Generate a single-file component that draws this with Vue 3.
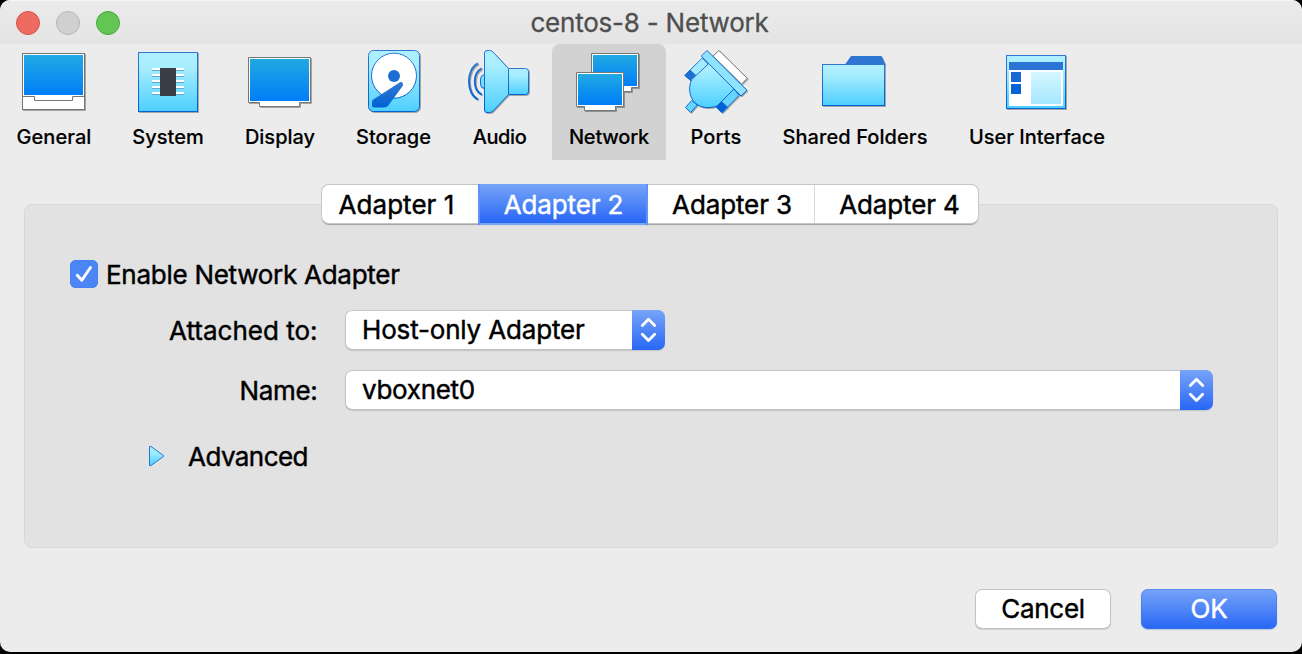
<script setup>
import { ref } from 'vue'

const tools = [
  { id: 'general', label: 'General', x: 0, w: 108, ls: 0.05 },
  { id: 'system', label: 'System', x: 108, w: 120, ls: 0 },
  { id: 'display', label: 'Display', x: 228, w: 104, ls: 0 },
  { id: 'storage', label: 'Storage', x: 332, w: 123, ls: 0.05 },
  { id: 'audio', label: 'Audio', x: 455, w: 89, ls: -0.4 },
  { id: 'network', label: 'Network', x: 552, w: 114, ls: -0.2 },
  { id: 'ports', label: 'Ports', x: 666, w: 100, ls: 0.15 },
  { id: 'folders', label: 'Shared Folders', x: 766, w: 178, ls: 0.08 },
  { id: 'ui', label: 'User Interface', x: 944, w: 186, ls: 0 }
]
const current = ref('network')
const tabs = ['Adapter 1', 'Adapter 2', 'Adapter 3', 'Adapter 4']
const tab = ref(1)
const enabled = ref(true)
</script>

<template>
  <div class="desktop">
    <div class="window">
      <header class="titlebar">
        <div class="lights">
          <i class="light red"></i><i class="light grey"></i><i class="light green"></i>
        </div>
        <h1>centos-8 - Network</h1>
      </header>

      <svg class="defs" width="0" height="0" aria-hidden="true">
        <defs>
          <linearGradient id="screen" x1="0" y1="0" x2="0" y2="1"><stop offset="0" stop-color="#20a9e2" /><stop offset="1" stop-color="#007ef8" /></linearGradient>
          <linearGradient id="sky" x1="0" y1="0" x2="0" y2="1"><stop offset="0" stop-color="#aff0ff" /><stop offset=".25" stop-color="#a8eeff" /><stop offset="1" stop-color="#4dcfff" /></linearGradient>
          <linearGradient id="edge" x1="0" y1="0" x2="0" y2="1"><stop offset="0" stop-color="#3278d2" /><stop offset="1" stop-color="#0062d4" /></linearGradient>
          <linearGradient id="pane" x1="0" y1="0" x2="0" y2="1"><stop offset="0" stop-color="#d6f7ff" /><stop offset="1" stop-color="#a5e7ff" /></linearGradient>
        </defs>
      </svg>

      <nav class="toolbar">
        <button v-for="t in tools" :key="t.id" class="tool" :class="[t.id, { active: current === t.id }]" @click="current = t.id">
          <svg :width="t.w" height="72" :viewBox="`${t.x} 44 ${t.w} 72`">
            <g v-if="t.id === 'general'" class="shade">
              <rect x="22.5" y="53.5" width="62" height="56" fill="#fff" stroke="#767676" />
              <rect x="24" y="55" width="59" height="40" fill="url(#screen)" />
              <path d="M22.5 96.5H34.5V100.500H72.500V96.500H84.500" fill="none" stroke="#767676" />
            </g>
            <g v-else-if="t.id === 'system'" class="shade">
              <rect x="138.500" y="52.500" width="59" height="59" fill="url(#sky)" stroke="url(#edge)" />
              <g v-for="n in 5" :key="n">
                <rect x="152" :y="62 + n * 6" width="32" height="2" fill="#fff" />
                <rect x="152" :y="64 + n * 6" width="32" height="1" fill="#62a9dc" />
              </g>
              <rect x="160" y="68" width="16" height="28" fill="#3a3e49" />
            </g>
            <g v-else-if="t.id === 'display'" class="shade">
              <path d="M248.500 57.500H310.500V102.500H299.500V106.500H259.500V102.500H248.500Z" fill="#fff" stroke="#767676" />
              <rect x="250" y="59" width="59" height="42" fill="url(#screen)" />
            </g>
            <g v-else-if="t.id === 'storage'" class="shade">
              <rect x="368.500" y="50.500" width="51" height="61" rx="5" fill="url(#sky)" stroke="url(#edge)" />
              <circle cx="394" cy="75.700" r="22.500" fill="#fff" stroke="url(#edge)" />
              <circle cx="394" cy="76" r="6" fill="#1c6dd4" />
              <path d="M400 82.300Q402.800 81.200 403 84.200Q403 85.500 402.300 86.600L388.500 105.200Q386.500 107.600 384 107.600H374Q372 107.600 372 105.500V102.200Q372 100.600 373.300 99.600L378 96.500Z" fill="url(#edge)" />
            </g>
            <g v-else-if="t.id === 'audio'" class="shade" stroke="url(#edge)">
              <path d="M478 63.500C466 69 466 94 478 99.300M481.700 68.300C472.500 73 472.500 90 481.700 94.500" fill="none" stroke-width="2" />
              <path d="M484.500 74.500Q480.500 75 480.500 79V84Q480.500 88 484.500 88.500Z" fill="#7fdcff" />
              <path d="M508.500 68.500H525.500Q528.500 68.500 528.500 71.500V91.500Q528.500 94.500 525.500 94.500H508.500Z" fill="url(#sky)" />
              <path d="M484.500 53Q484.500 50.500 487 50.500H489.500Q491.500 50.500 493 52L508.500 68.500V94.500L493 111Q491.500 112.500 489.500 112.500H487Q484.500 112.500 484.500 110Z" fill="url(#sky)" />
            </g>
            <g v-else-if="t.id === 'network'" class="shade">
              <path d="M591.500 53.500H638.500V87.500H631.500V91.500H599.500V87.500H591.500Z" fill="#fff" stroke="#767676" />
              <rect x="593" y="55" width="44" height="31" fill="url(#screen)" />
              <path d="M576.500 72.500H623.500V106.500H615.500V110.500H584.500V106.500H576.500Z" fill="#fff" stroke="#767676" />
              <rect x="578" y="74" width="44" height="31" fill="url(#screen)" />
            </g>
            <g v-else-if="t.id === 'ports'" class="shade" stroke="url(#edge)" stroke-linejoin="round">
              <path d="M719 50.500L747.300 78.300L741.500 84L713 56Z" fill="#fff" stroke="#777" />
              <path d="M691.500 100.500L697.300 105L690.700 112.500L685.500 107.500Z" fill="#63d5ff" />
              <path d="M702.300 58L684.800 75.200L691.600 81.300L708.300 64Z" fill="#a3ecff" />
              <path d="M739 95.500L722 112.500L715.700 106.700L734 89Z" fill="#65d5ff" />
              <path d="M684.800 75.200L690 70L697 76.500L691.600 81.300Z" fill="#1c6dd4" />
              <path d="M715.700 106.700L721.200 101.200L727.500 107L722 112.500Z" fill="#0062d4" />
              <path d="M702.300 58L708.300 64L691.500 79.500C687 91 691 101 698 105C704 109 713 107.500 717 106L734 89L739.500 94.800Z" fill="url(#sky)" stroke="none" />
              <path d="M702.500 58.200L708.300 64L691.500 79.800C687 91 691 101 698 105C704 109 713 107.500 717 106L734 89L739.500 94.500" fill="none" />
              <path d="M707 50.500L747 90.300L741 96L701.200 56Z" fill="#8ee4ff" />
            </g>
            <g v-else-if="t.id === 'folders'" class="shade">
              <path d="M845 64.500L851 56H881.500L885.500 64.500Z" fill="#2f76d2" />
              <rect x="822.500" y="64.500" width="62" height="41" fill="url(#sky)" stroke="url(#edge)" />
            </g>
            <g v-else class="shade">
              <rect x="1006.500" y="55.500" width="59" height="53" fill="url(#sky)" stroke="url(#edge)" />
              <rect x="1009" y="62" width="54" height="44" fill="#fff" />
              <rect x="1009" y="62" width="54" height="8" fill="#2c74d3" />
              <rect x="1011" y="72" width="10" height="10" fill="#176ad5" />
              <rect x="1011" y="84" width="10" height="10" fill="#0463d6" />
              <rect x="1031" y="72" width="30" height="32" fill="url(#pane)" />
            </g>
          </svg>
          <span :style="{ letterSpacing: t.ls + 'px' }">{{ t.label }}</span>
        </button>
      </nav>

      <main>
        <div class="tabs" role="tablist">
          <button v-for="(t, i) in tabs" :key="t" class="tab" :class="{ selected: tab === i }" @click="tab = i"><span>{{ t }}</span></button>
        </div>

        <section class="group">
          <label class="enable">
            <span class="check" @click="enabled = !enabled">
              <svg v-if="enabled" width="28" height="28" viewBox="0 0 28 28"><path d="M7.300 15.300L11.800 20.300L20.500 7.500" fill="none" stroke="#fff" stroke-width="2.900" stroke-linecap="round" stroke-linejoin="round" /></svg>
            </span>
            <span class="enable-text">Enable Network Adapter</span>
          </label>

          <div class="row">
            <span class="caption">Attached to:</span>
            <div class="select short">
              <span class="value host">Host-only Adapter</span>
              <span class="stepper"><svg width="33" height="40" viewBox="0 0 33 40"><path d="M10.300 15.500L16.500 9.200L22.700 15.500M10.300 24.200L16.500 30.500L22.700 24.200" fill="none" stroke="#fff" stroke-width="2.800" stroke-linecap="round" stroke-linejoin="round" /></svg></span>
            </div>
          </div>

          <div class="row">
            <span class="caption name">Name:</span>
            <div class="select long">
              <span class="value vbox">vboxnet0</span>
              <span class="stepper"><svg width="33" height="40" viewBox="0 0 33 40"><path d="M10.300 15.500L16.500 9.200L22.700 15.500M10.300 24.200L16.500 30.500L22.700 24.200" fill="none" stroke="#fff" stroke-width="2.800" stroke-linecap="round" stroke-linejoin="round" /></svg></span>
            </div>
          </div>

          <div class="advanced">
            <svg width="18" height="22" viewBox="0 0 18 22"><path d="M1.500 1.500H3L15.500 10.500V11.500L3 20.500H1.500Z" fill="url(#sky)" stroke="#1f78d8" stroke-linejoin="round" /></svg>
            <span>Advanced</span>
          </div>
        </section>
      </main>

      <footer>
        <button class="btn cancel">Cancel</button>
        <button class="btn ok">OK</button>
      </footer>
    </div>
  </div>
</template>

<style>
body { background: #000; }
</style>

<style scoped>
.desktop {
  width: 1302px;
  height: 654px;
  background: #000;
  overflow: hidden;
}
.window {
  height: 652px;
  border-radius: 10px;
  background: #ececec;
  overflow: hidden;
  display: flex;
  flex-direction: column;
  font: 400 26px/40px Inter, "Liberation Sans", sans-serif;
  color: #000;
  -webkit-text-stroke: 0.45px currentColor;
}
button {
  font: inherit;
  color: inherit;
  border: 0;
  padding: 0;
  margin: 0;
  background: none;
  -webkit-text-stroke: inherit;
}
.defs { position: absolute; }
.titlebar {
  flex: none;
  height: 44px;
  box-sizing: border-box;
  border-top: 1px solid #f6f6f6;
  background: linear-gradient(#ebebeb, #e4e4e4);
  display: grid;
  grid-template-columns: 200px 1fr 200px;
  align-items: center;
}
.lights {
  display: flex;
  gap: 16px;
  padding-left: 16px;
}
.light {
  width: 24px;
  height: 24px;
  box-sizing: border-box;
  border-radius: 50%;
  border: 1px solid #b5b5b5;
  background: #d0d0d0;
}
.light.red { background: #ed6b60; border-color: #dc5149; }
.light.green { background: #62c554; border-color: #4aa83c; }
h1 {
  margin: 0;
  padding-right: 3px;
  font-size: 26px;
  font-weight: 400;
  line-height: 43px;
  letter-spacing: -0.22px;
  text-align: center;
  color: #4f4f4f;
  -webkit-text-stroke: 0.3px currentColor;
}
.toolbar {
  flex: none;
  display: flex;
  height: 116px;
}
.tool {
  display: flex;
  flex-direction: column;
  align-items: center;
  font-size: 20px;
  font-weight: 500;
  line-height: 24px;
  white-space: nowrap;
  -webkit-text-stroke: 0.15px currentColor;
}
.tool svg { display: block; }
.tool span { margin-top: 9px; }
.tool.network { margin-left: 8px; }
.tool.active {
  background: #d2d2d2;
  border-radius: 8px 8px 0 0;
}
.shade { filter: drop-shadow(1px 1px 0.3px rgba(0, 0, 0, 0.3)); }
main {
  flex: none;
  margin: 24px 24px 0;
  height: 364px;
  display: flex;
  flex-direction: column;
}
.tabs {
  position: relative;
  z-index: 1;
  align-self: flex-start;
  margin-left: 298px;
  display: grid;
  grid-template-columns: 156px 170px 167px 163px;
  height: 38px;
  margin-top: 1px;
  margin-bottom: -19px;
  background: #fff;
  border-radius: 7px;
  box-shadow: 0 0 0 1px #c6c6c6, 0 1.5px 1px #a0a0a0;
}
.tab {
  height: 38px;
  line-height: 39px;
  letter-spacing: -0.12px;
  white-space: nowrap;
}
.tab:nth-child(1) { padding-right: 7px; }
.tab:nth-child(1) span { letter-spacing: 0.05px; }
.tab:nth-child(2) { padding-left: 1px; }
.tab:nth-child(3) { padding-left: 2px; border-right: 1px solid #d8d8d8; }
.tab:nth-child(4) { padding-left: 6px; }
.tab.selected {
  height: 41px;
  margin-top: -1px;
  line-height: 41px;
  color: #fff;
  background: linear-gradient(#77a4f8, #2867f6 94%, #78a6f5 96%);
  box-shadow: inset 2px 0 #5c93f5, inset -2px 0 #5c93f5;
}
.group {
  flex: none;
  height: 344px;
  box-sizing: border-box;
  border: 1px solid #d7d7d7;
  border-radius: 8px;
  background: #e2e2e2;
  padding: 50px 0 0 45px;
  display: flex;
  flex-direction: column;
}
.enable {
  display: flex;
  align-items: center;
  height: 40px;
}
.check {
  width: 28px;
  height: 28px;
  margin-top: -2px;
  border-radius: 6px;
  background: #4c86f5;
  box-shadow: inset 0 0 0 1px #457ff0;
}
.check svg { display: block; }
.enable-text { margin-left: 8px; letter-spacing: -0.27px; }
.row {
  display: flex;
  margin-top: 15px;
  height: 40px;
}
.row + .row { margin-top: 20px; }
.caption {
  width: 247.5px;
  margin-right: 27.5px;
  padding-top: 1px;
  text-align: right;
}
.caption.name { letter-spacing: -0.3px; }
.select {
  display: flex;
  justify-content: space-between;
  height: 40px;
  box-sizing: border-box;
  border-radius: 7px;
  background: #fff;
  box-shadow: inset 0 0 0 1px #c4c4c4, inset 0 -1px #a9a9a9, 0 1px 1px #c4c4c4;
  overflow: hidden;
}
.select.short { width: 320px; }
.select.long { width: 868px; }
.value { padding-left: 17px; }
.host { letter-spacing: -0.17px; }
.vbox { letter-spacing: -0.3px; }
.stepper {
  width: 33px;
  height: 40px;
  background: linear-gradient(#77a4f8, #2867f6);
}
.stepper svg { display: block; }
.advanced {
  display: flex;
  align-items: center;
  margin: 27px 0 0 78px;
  height: 40px;
  letter-spacing: -0.55px;
}
.advanced svg { margin-right: 22px; margin-top: -2px; }
footer {
  margin-top: 41px;
  display: flex;
  justify-content: flex-end;
  gap: 30px;
  padding-right: 25px;
}
.btn {
  width: 136px;
  height: 40px;
  border-radius: 7px;
  letter-spacing: -0.28px;
  background: #fff;
  box-shadow: inset 0 0 0 1px #c4c4c4, inset 0 -1px #a9a9a9, 0 1px 1px #cfcfcf;
}
.ok {
  color: #fff;
  background: linear-gradient(#77a4f8, #2867f6);
  box-shadow: inset 0 0 0 1px rgba(60, 120, 240, 0.5), 0 1px 1px #b9c4d8;
}
</style>
